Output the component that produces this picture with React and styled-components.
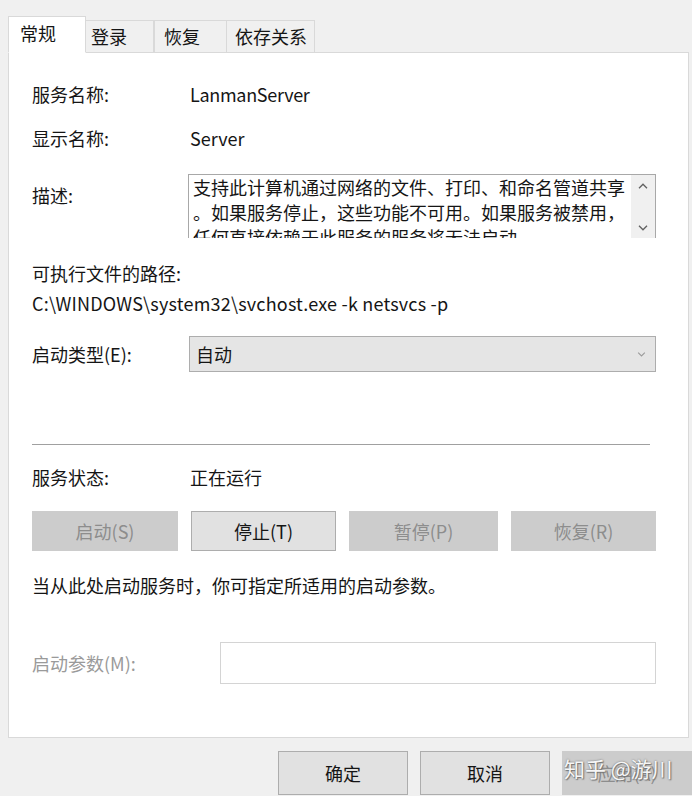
import React from "react";
import styled, { createGlobalStyle } from "styled-components";

const Global = createGlobalStyle`
  html, body { margin: 0; padding: 0; background: #f0f0f0; }
  body { font-family: "Noto Sans CJK SC", "Noto Sans", sans-serif; color: #151515; }
  * { box-sizing: border-box; }
`;

const Window = styled.div`
  width: 692px;
  height: 796px;
  overflow: hidden;
  padding: 16px 3px 0 8px;
  display: flex;
  flex-direction: column;
  background: #f0f0f0;
  font-size: 18px;
`;

const TabBar = styled.div`
  display: flex;
  align-items: flex-end;
  height: 37px;
  margin-bottom: -1px;
  position: relative;
  z-index: 1;
`;

const Tab = styled.div`
  width: ${(p) => p.$w}px;
  height: ${(p) => (p.$active ? 37 : 33)}px;
  padding-left: ${(p) => p.$pl}px;
  display: flex;
  align-items: center;
  padding-bottom: ${(p) => (p.$active ? 3 : 1)}px;
  background: ${(p) => (p.$active ? "#ffffff" : "#f0f0f0")};
  border: 1px solid #d9d9d9;
  border-bottom: ${(p) => (p.$active ? "1px solid #ffffff" : "1px solid #d9d9d9")};
  border-left-width: ${(p) => (p.$noLeft ? 0 : 1)}px;
  line-height: 24px;
  color: #151515;
`;

const Panel = styled.div`
  background: #ffffff;
  border: 1px solid #d9d9d9;
  height: 686px;
  padding: 29px 32px 0 23px;
  display: flex;
  flex-direction: column;
`;

const Row = styled.div`
  display: grid;
  grid-template-columns: ${(p) => p.$label || 158}px 1fr;
  align-items: ${(p) => p.$align || "center"};
  margin-top: ${(p) => p.$mt || 0}px;
  line-height: 24px;
`;

const Text = styled.div`
  margin-top: ${(p) => p.$mt || 0}px;
  line-height: 24px;
  white-space: nowrap;
  letter-spacing: ${(p) => p.$ls || 0}px;
  color: ${(p) => (p.$dim ? "#9a9a9a" : "#151515")};
`;

const Label = styled.div`
  margin-top: ${(p) => p.$mt || 0}px;
  line-height: 24px;
  white-space: nowrap;
  color: ${(p) => (p.$dim ? "#9a9a9a" : "#151515")};
`;

const DescBox = styled.div`
  margin-left: -2px;
  margin-top: 1px;
  height: 64px;
  display: flex;
  border: 1px solid #a8a8a8;
  border-bottom: 0;
  overflow: hidden;
  background: #fff;
`;

const DescText = styled.div`
  flex: 1;
  padding: 0 0 0 4px;
  line-height: 25px;
  overflow: hidden;
`;

const DescLine = styled.div`
  white-space: nowrap;
`;

const ScrollCol = styled.div`
  width: 24px;
  background: #f0f0f0;
  display: flex;
  flex-direction: column;
  justify-content: space-between;
  align-items: center;
  padding: 8px 0 7px;
`;

const Chevron = ({ up, color = "#606060", w = 10, h = 6 }) => (
  <svg width={w} height={h} viewBox="0 0 10 6" fill="none">
    <path
      d={up ? "M1 5.2 L5 1.2 L9 5.2" : "M1 0.8 L5 4.8 L9 0.8"}
      stroke={color}
      strokeWidth="1.3"
    />
  </svg>
);

const Select = styled.div`
  margin-left: -1px;
  height: 36px;
  background: #e5e5e5;
  border: 1px solid #adadad;
  display: flex;
  align-items: center;
  justify-content: space-between;
  padding: 0 9px 0 6px;
`;

const Separator = styled.div`
  margin-top: 72px;
  width: 618px;
  height: 1px;
  background: #a0a0a0;
`;

const ButtonRow = styled.div`
  margin-top: 22px;
  display: flex;
  justify-content: space-between;
`;

const Button = styled.div`
  position: relative;
  width: ${(p) => p.$w}px;
  height: ${(p) => p.$h || 40}px;
  flex-shrink: 0;
  display: flex;
  align-items: center;
  justify-content: center;
  background: ${(p) => (p.$disabled ? "#cccccc" : "#e1e1e1")};
  border: 1px solid ${(p) => (p.$disabled ? "#cccccc" : "#adadad")};
  color: ${(p) => (p.$disabled ? "#8d8d8d" : "#151515")};
  white-space: nowrap;
`;

const Input = styled.div`
  height: 42px;
  border: 1px solid #d4d4d4;
  background: #fff;
`;

const Footer = styled.div`
  margin-top: 13px;
  padding-left: 270px;
  display: flex;
  gap: 12px;
`;

const Watermark = styled.div`
  position: absolute;
  left: 1px;
  top: 2px;
  font-size: 21px;
  line-height: 28px;
  color: #f6f6f6;
  white-space: nowrap;
  text-shadow: 0 0 2px #6a6a6a, 1px 1px 1px #7a7a7a;
`;

export default function App() {
  return (
    <>
      <Global />
      <Window>
        <TabBar>
          <Tab $active $w={78} $pl={11}>常规</Tab>
          <Tab $w={68} $pl={5} $noLeft>登录</Tab>
          <Tab $w={73} $pl={9}>恢复</Tab>
          <Tab $w={88} $pl={8} $noLeft>依存关系</Tab>
        </TabBar>
        <Panel>
          <Row>
            <Label>服务名称:</Label>
            <Text $ls={-0.3}>LanmanServer</Text>
          </Row>
          <Row $mt={20}>
            <Label>显示名称:</Label>
            <Text>Server</Text>
          </Row>
          <Row $mt={23} $align="start">
            <Label $mt={10}>描述:</Label>
            <DescBox>
              <DescText>
                <DescLine>支持此计算机通过网络的文件、打印、和命名管道共享</DescLine>
                <DescLine>。如果服务停止，这些功能不可用。如果服务被禁用，</DescLine>
                <DescLine>任何直接依赖于此服务的服务将无法启动。</DescLine>
              </DescText>
              <ScrollCol>
                <Chevron up />
                <Chevron />
              </ScrollCol>
            </DescBox>
          </Row>
          <Text $mt={23}>可执行文件的路径:</Text>
          <Text $mt={6} $ls={0.2}>C:\WINDOWS\system32\svchost.exe -k netsvcs -p</Text>
          <Row $mt={21}>
            <Label>启动类型(E):</Label>
            <Select>
              <span>自动</span>
              <Chevron color="#9a9a9a" w={9} h={5} />
            </Select>
          </Row>
          <Separator />
          <Row $mt={20}>
            <Label>服务状态:</Label>
            <Text>正在运行</Text>
          </Row>
          <ButtonRow>
            <Button $w={146} $disabled>启动(S)</Button>
            <Button $w={145}>停止(T)</Button>
            <Button $w={149} $disabled>暂停(P)</Button>
            <Button $w={145} $disabled>恢复(R)</Button>
          </ButtonRow>
          <Text $mt={22}>当从此处启动服务时，你可指定所适用的启动参数。</Text>
          <Row $mt={45} $label={188}>
            <Label $dim>启动参数(M):</Label>
            <Input />
          </Row>
        </Panel>
        <Footer>
          <Button $w={130} $h={44}>确定</Button>
          <Button $w={130} $h={44}>取消</Button>
          <Button $w={130} $h={44} $disabled>
            应用(A)
            <Watermark>知乎 @游川</Watermark>
          </Button>
        </Footer>
      </Window>
    </>
  );
}
